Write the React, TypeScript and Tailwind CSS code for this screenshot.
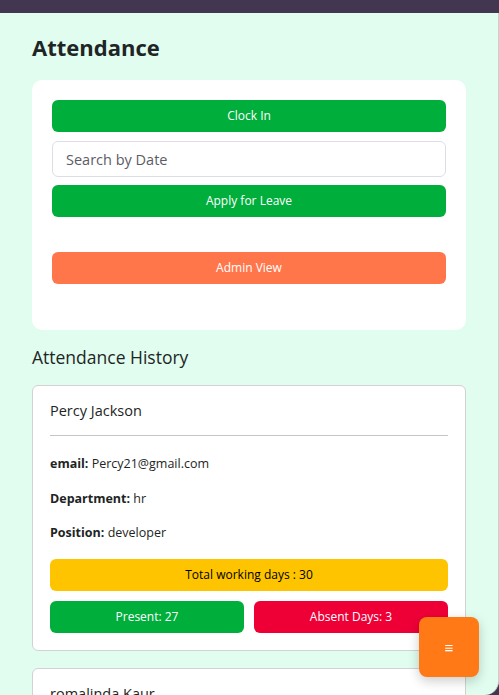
import { useState } from "react";

const people = [
  { name: "Percy Jackson", email: "Percy21@gmail.com", department: "hr", position: "developer", total: 30, present: 27, absent: 3 },
  { name: "romalinda Kaur", email: "romalinda@gmail.com", department: "it", position: "designer", total: 30, present: 25, absent: 5 },
];

export default function App() {
  const [date, setDate] = useState("");

  const btn = "w-full h-8 rounded-md text-white text-[12px] flex items-center justify-center";

  return (
    <div className="min-h-screen bg-[#433650] font-['Open_Sans',sans-serif] text-[#1d2524]">
      <div className="h-[13px]" />
      <main className="h-[682px] overflow-hidden bg-[#e0fdef] border-r border-[#c5d3cc] rounded-br-[14px] px-8">
        <h1 className="text-[22px] font-bold pt-[19px] leading-[30px] text-[#1f2526]">Attendance</h1>

        <section className="mt-[18px] bg-white rounded-[10px] px-5 pt-5 pb-[46px] flex flex-col">
          <button className={`${btn} bg-[#00ae3c]`}>Clock In</button>
          <input
            className="mt-[9px] h-9 w-full rounded-md border border-[#dedde6] px-[13px] text-[14.5px] placeholder:text-[#5c5c66] outline-none"
            placeholder="Search by Date"
            value={date}
            onChange={(e) => setDate(e.target.value)}
          />
          <button className={`${btn} mt-2 bg-[#00ae3c]`}>Apply for Leave</button>
          <button className={`${btn} mt-[35px] bg-[#ff764b]`}>Admin View</button>
        </section>

        <h2 className="mt-[16px] text-[17.5px] leading-[22px] text-[#1f2526]">Attendance History</h2>

        <div className="mt-[17px] flex flex-col gap-[17px]">
          {people.map((p) => (
            <div key={p.name} className="bg-white border border-[#d2d2d2] rounded-md px-[17px] pt-[15px] pb-[17px]">
              <div className="text-[14.5px] leading-[20px] pb-[14px] border-b border-[#c6c6c6]">{p.name}</div>
              <p className="mt-[19px] text-[12.5px] leading-[18px]"><b>email:</b> {p.email}</p>
              <p className="mt-[17px] text-[12.5px] leading-[18px]"><b>Department:</b> {p.department}</p>
              <p className="mt-[16px] text-[12.5px] leading-[18px]"><b>Position:</b> {p.position}</p>
              <div className="mt-[17px] h-8 rounded-md bg-[#ffc400] text-[12px] text-black flex items-center justify-center">
                Total working days : {p.total}
              </div>
              <div className="mt-[10px] grid grid-cols-2 gap-[10px]">
                <div className={`${btn} bg-[#00ae3c]`}>Present: {p.present}</div>
                <div className={`${btn} bg-[#ee0037]`}>Absent Days: {p.absent}</div>
              </div>
            </div>
          ))}
        </div>
      </main>

      <button className="fixed right-5 bottom-[18px] w-[60px] h-[60px] rounded-lg bg-[#ff7a17] text-white text-[15px] shadow-[0_4px_12px_rgba(0,0,0,0.2)] flex items-center justify-center">
        ≡
      </button>
    </div>
  );
}
